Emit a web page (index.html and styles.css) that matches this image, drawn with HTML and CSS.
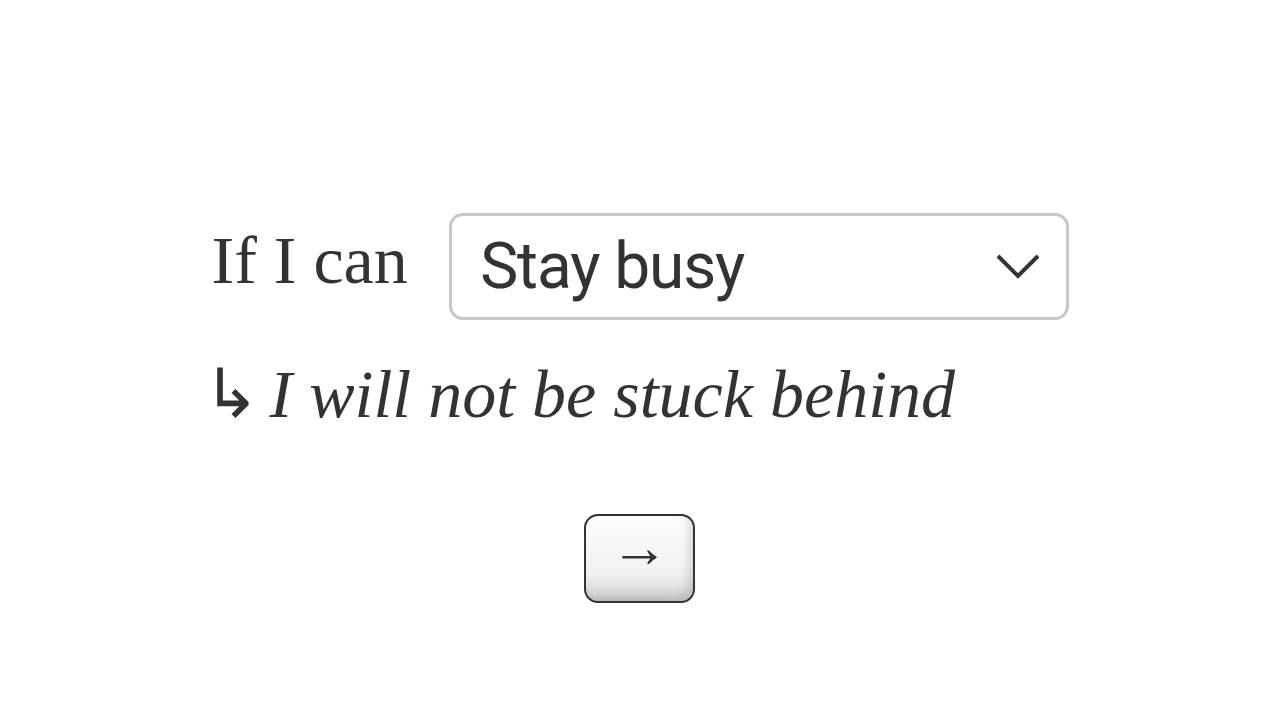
FILE: index.html
```html
<!DOCTYPE html>
<html>
<head>
<meta charset="utf-8">
<link rel="stylesheet" href="styles.css">
</head>
<body>
<main class="page">
  <div class="sentence">
    <div class="row">
      <span class="lead">If I can</span>
      <div class="select">
        <span class="select-value">Stay busy</span>
        <svg class="chevron" width="44" height="28" viewBox="0 0 44 28"><path d="M2 4 L22 24 L42 4" fill="none" stroke="#333" stroke-width="4"/></svg>
      </div>
    </div>
    <div class="row result">
      <span class="hook">↳</span>
      <span class="outcome">I will not be stuck behind</span>
    </div>
  </div>
  <button class="next">→</button>
</main>
</body>
</html>
```
FILE: styles.css
```css
html, body { margin: 0; padding: 0; background: #fff; }
body { width: 1280px; height: 720px; color: #333; }
.page {
  display: flex;
  flex-direction: column;
  align-items: center;
  padding-top: 213px;
}
.sentence { width: 857px; display: flex; flex-direction: column; }
.row { display: flex; align-items: center; }
.lead {
  font-family: "Liberation Serif", serif;
  font-size: 68px;
  width: 238px;
  line-height: 1;
  margin-top: -13px;
}
.select {
  box-sizing: border-box;
  width: 620px;
  height: 107px;
  border: 3px solid #c8c8c8;
  border-radius: 14px;
  display: flex;
  align-items: center;
  justify-content: space-between;
  padding: 0 26px 0 28px;
}
.select-value {
  font-family: Roboto, sans-serif;
  font-size: 64px;
  letter-spacing: -1.1px;
  color: #333;
}
.chevron { display: block; margin-top: -2px; }
.result { margin-top: 40px; align-items: baseline; }
.hook {
  font-family: "Liberation Serif", serif;
  font-size: 68px;
  line-height: 1;
  width: 58px;
  margin-left: -9px;
  padding-right: 9px;
}
.outcome {
  font-family: "Liberation Serif", serif;
  font-style: italic;
  font-size: 68px;
  line-height: 1;
}
.next {
  margin-top: 86px;
  margin-right: 1px;
  width: 111px;
  height: 89px;
  box-sizing: border-box;
  border: 2px solid #333;
  border-radius: 14px;
  background: linear-gradient(#fcfcfc, #f2f2f2 65%, #d4d4d4);
  box-shadow: inset -5px -6px 8px rgba(0,0,0,0.12);
  font-family: "Liberation Serif", serif;
  font-size: 58px;
  line-height: 1;
  color: #333;
  padding: 0 0 22px 0;
}
```
